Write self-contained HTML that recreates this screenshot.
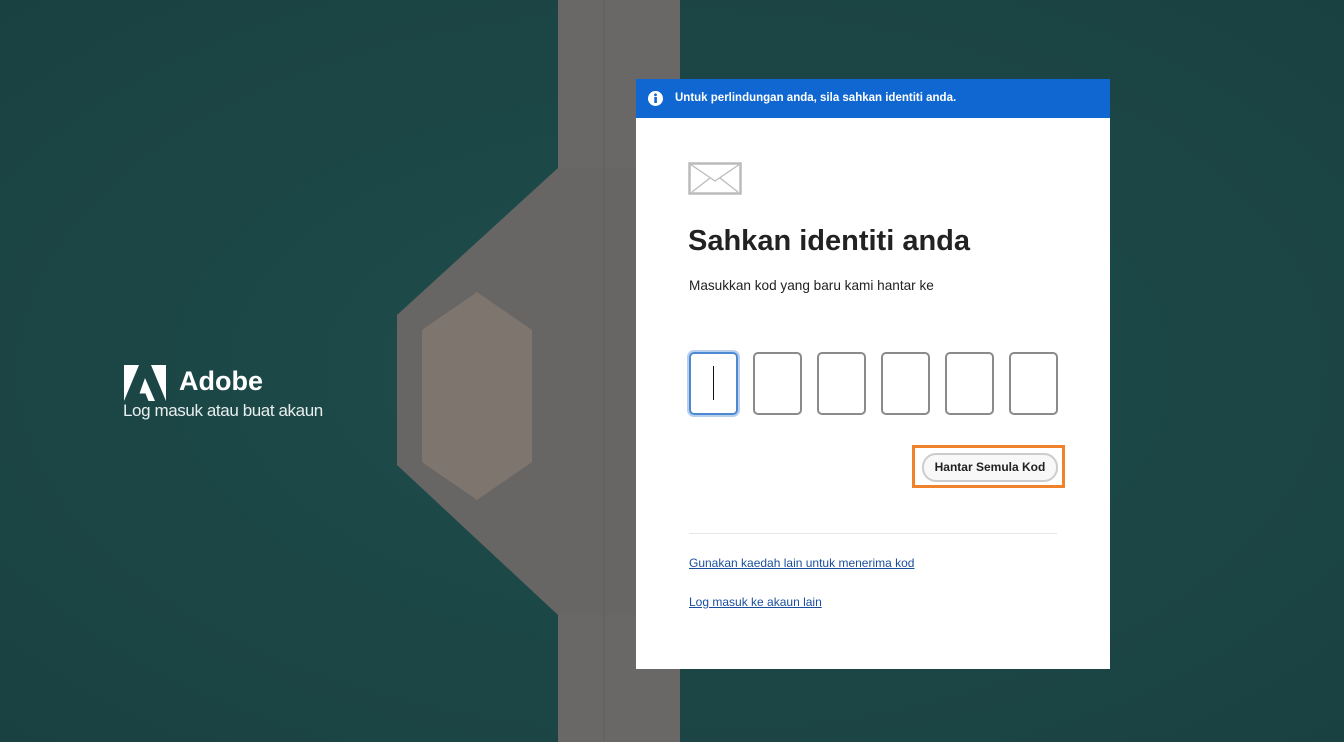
<!DOCTYPE html>
<html><head><meta charset="utf-8"><style>
body{margin:0;width:1344px;height:742px;overflow:hidden;background:#1e4645;font-family:"Liberation Sans",sans-serif;position:relative}
.abs{position:absolute}
.card{left:636px;top:79px;width:474px;height:590px;background:#fff}
.banner{left:0;top:0;width:474px;height:39px;background:#1067d1;color:#fff;font-size:11.5px;font-weight:bold}
.in{width:45px;height:59px;border:2px solid #8a8a8a;border-radius:5px;top:273px}
a{color:#1a4e9c;font-size:12px}
</style></head><body>
<svg class="abs" style="left:0;top:0" width="1344" height="742">
<defs><radialGradient id="g" cx="50%" cy="50%" r="70%"><stop offset="0" stop-color="#1f4d4d"/><stop offset="1" stop-color="#1a4141"/></radialGradient></defs>
<rect width="1344" height="742" fill="url(#g)"/>
<rect x="558" y="0" width="122" height="742" fill="#696866"/>
<polygon points="558,168 397,315 397,465 558,615 700,615 700,168" fill="#676664"/>
<polygon points="477,292 532,330 532,462 477,500 422,462 422,330" fill="#7f756f"/>
<line x1="604" y1="0" x2="604" y2="742" stroke="#5f5e5c" stroke-width="1"/>
</svg>
<svg class="abs" style="left:124px;top:365px" width="42" height="36" viewBox="0 0 42 36"><path d="M0 0H15L0 36Z M27 0H42V36Z M21 13 31 36H24.5L21.5 28.5H15.5Z" fill="#fff"/></svg>
<div class="abs" style="left:179px;top:366px;color:#fff;font-size:27px;font-weight:bold">Adobe</div>
<div class="abs" style="left:123px;top:401px;color:#e8eeee;font-size:17px;letter-spacing:-0.4px">Log masuk atau buat akaun</div>
<div class="abs card">
 <div class="abs banner"><svg class="abs" style="left:12px;top:12px" width="15" height="15"><circle cx="7.5" cy="7.5" r="7.5" fill="#fff"/><rect x="6.3" y="6" width="2.6" height="6" fill="#1067d1"/><circle cx="7.5" cy="3.8" r="1.4" fill="#1067d1"/></svg><span class="abs" style="left:39px;top:12px;line-height:14px">Untuk perlindungan anda, sila sahkan identiti anda.</span></div>
 <svg class="abs" style="left:52px;top:83px" width="54" height="33"><rect x="1.5" y="1.5" width="51" height="30" fill="none" stroke="#bbb" stroke-width="2.5"/><path d="M2 2 27 19 52 2 M4 30 22 16 M50 30 32 16" fill="none" stroke="#bbb" stroke-width="1.3"/></svg>
 <div class="abs" style="left:52px;top:146px;font-size:29px;font-weight:bold;color:#222">Sahkan identiti anda</div>
 <div class="abs" style="left:53px;top:199px;font-size:13.6px;color:#222">Masukkan kod yang baru kami hantar ke</div>
 <div class="abs in" style="left:53px;border-color:#4d89d0;box-shadow:0 0 0 2px #b8d0ee"><div class="abs" style="left:22px;top:12px;width:1px;height:34px;background:#111"></div></div>
 <div class="abs in" style="left:117px"></div>
 <div class="abs in" style="left:181px"></div>
 <div class="abs in" style="left:245px"></div>
 <div class="abs in" style="left:309px"></div>
 <div class="abs in" style="left:373px"></div>
 <div class="abs" style="left:276px;top:366px;width:147px;height:37px;border:3px solid #f0822a"></div>
 <div class="abs" style="left:286px;top:374px;width:132px;height:25px;border:2px solid #ccc;border-radius:14px;background:#f8f8f8;font-size:12px;font-weight:bold;color:#222;text-align:center;line-height:25px">Hantar Semula Kod</div>
 <div class="abs" style="left:53px;top:454px;width:368px;height:1px;background:#e6e6e6"></div>
 <a class="abs" style="left:53px;top:477px;text-decoration:underline">Gunakan kaedah lain untuk menerima kod</a>
 <a class="abs" style="left:53px;top:516px;text-decoration:underline">Log masuk ke akaun lain</a>
</div>
</body></html>
